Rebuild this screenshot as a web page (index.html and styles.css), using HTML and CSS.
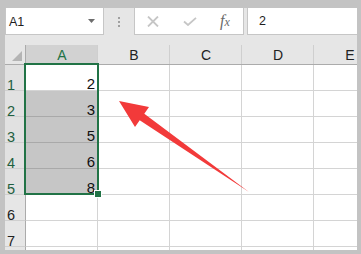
FILE: index.html
```html
<!DOCTYPE html>
<html>
<head>
<meta charset="utf-8">
<link rel="stylesheet" href="styles.css">
</head>
<body>
<div class="frame">
  <div class="toolbar">
    <div class="namebox">
      <span class="ref">A1</span>
      <svg class="dd" width="8" height="5" viewBox="0 0 8 5"><polygon points="0,0 7,0 3.5,4" fill="#6d6d6d"/></svg>
    </div>
    <div class="grip"><i></i><i></i><i></i></div>
    <div class="fbuttons">
      <svg class="ic" width="12" height="11" viewBox="0 0 12 11"><path d="M1 0.5 L11 10.5 M11 0.5 L1 10.5" stroke="#c6c6c6" stroke-width="1.8" fill="none"/></svg>
      <svg class="ic" width="14" height="9" viewBox="0 0 14 9"><path d="M1 4.5 L5 8 L13 0.8" stroke="#c6c6c6" stroke-width="1.8" fill="none"/></svg>
      <span class="fx">f<small>x</small></span>
    </div>
    <div class="formula">2</div>
  </div>
  <div class="sheet">
    <div class="corner"><span class="tri"></span></div>
    <div class="ch sel">A</div>
    <div class="ch">B</div>
    <div class="ch">C</div>
    <div class="ch">D</div>
    <div class="ch">E</div>

    <div class="rh sel">1</div><div class="c num">2</div><div class="c"></div><div class="c"></div><div class="c"></div><div class="c"></div>
    <div class="rh sel">2</div><div class="c num g">3</div><div class="c"></div><div class="c"></div><div class="c"></div><div class="c"></div>
    <div class="rh sel">3</div><div class="c num g">5</div><div class="c"></div><div class="c"></div><div class="c"></div><div class="c"></div>
    <div class="rh sel">4</div><div class="c num g">6</div><div class="c"></div><div class="c"></div><div class="c"></div><div class="c"></div>
    <div class="rh sel">5</div><div class="c num g">8</div><div class="c"></div><div class="c"></div><div class="c"></div><div class="c"></div>
    <div class="rh">6</div><div class="c"></div><div class="c"></div><div class="c"></div><div class="c"></div><div class="c"></div>
    <div class="rh">7</div><div class="c"></div><div class="c"></div><div class="c"></div><div class="c"></div><div class="c"></div>
    <div class="rh"></div><div class="c"></div><div class="c"></div><div class="c"></div><div class="c"></div><div class="c"></div>

    <div class="selection"></div>
    <div class="handle"></div>
  </div>
  <svg class="arrow" width="361" height="254" viewBox="0 0 361 254">
    <polygon points="119,101 149,107 144.3,113.7 249,192 139.7,120.3 135,127" fill="#f23a3a"/>
  </svg>
</div>
</body>
</html>
```

FILE: styles.css
```css
html, body {
  margin: 0;
  padding: 0;
  background: #c3c3c3;
}
.frame {
  position: relative;
  width: 361px;
  height: 254px;
  box-sizing: border-box;
  padding: 8px 4px 4px 5px;
  background: #c3c3c3;
  overflow: hidden;
  font-family: "Liberation Sans", Arial, sans-serif;
}
.toolbar {
  display: flex;
  align-items: flex-start;
  height: 37px;
  background: #e6e6e6;
}
.namebox {
  box-sizing: border-box;
  width: 99px;
  height: 27px;
  background: #fff;
  border: 1px solid #c6c6c6;
  border-top: none;
  display: flex;
  align-items: center;
  justify-content: space-between;
  padding: 0 7px 0 3px;
}
.ref {
  font-size: 12.5px;
  color: #1e1e1e;
  padding-top: 1px;
}
.dd { display: block; }
.grip {
  margin-left: 14px;
  padding-top: 9px;
  width: 2px;
  display: flex;
  flex-direction: column;
  gap: 2px;
}
.grip i {
  display: block;
  width: 2px;
  height: 2px;
  background: #a0a0a0;
}
.fbuttons {
  box-sizing: border-box;
  margin-left: 14px;
  width: 110px;
  height: 27px;
  background: #fff;
  border: 1px solid #c6c6c6;
  border-top: none;
  display: flex;
  align-items: center;
  padding-left: 12px;
  gap: 24px;
}
.fbuttons .ic { display: block; }
.fx {
  font-family: "Liberation Serif", "Times New Roman", serif;
  font-style: italic;
  font-size: 16px;
  color: #6a6a6a;
  margin-left: -1px;
}
.fx small {
  font-size: 12px;
}
.formula {
  box-sizing: border-box;
  margin-left: 3px;
  flex: 1;
  height: 27px;
  background: #fff;
  border: 1px solid #c6c6c6;
  border-top: none;
  border-right: none;
  padding-left: 11px;
  font-size: 12.5px;
  line-height: 26px;
  color: #1e1e1e;
}
.sheet {
  position: relative;
  height: 205px;
  overflow: hidden;
  background: #fff;
  display: grid;
  grid-template-columns: 21px 72px 72px 72px 72px 72px;
  grid-template-rows: 20px repeat(8, 26px);
}
.corner {
  position: relative;
  background: #e6e6e6;
  border-right: 1px solid #ababab;
  border-bottom: 1px solid #ababab;
}
.tri {
  position: absolute;
  right: 3px;
  bottom: 3px;
  width: 0;
  height: 0;
  border-left: 10px solid transparent;
  border-bottom: 10px solid #b4b4b4;
}
.ch {
  background: #e6e6e6;
  border-bottom: 1px solid #ababab;
  box-shadow: inset -1px 0 0 #cfcfcf;
  font-size: 14px;
  color: #222;
  text-align: center;
  line-height: 21px;
}
.ch.sel {
  background: #d2d2d2;
  color: #217346;
}
.rh {
  background: #e6e6e6;
  border-right: 1px solid #ababab;
  border-bottom: 1px solid #cfcfcf;
  font-size: 14.5px;
  color: #222;
  padding-left: 2px;
  line-height: 40px;
}
.rh.sel {
  background: #e1e1e1;
  color: #1f5f3f;
}
.c {
  border-right: 1px solid #d4d4d4;
  border-bottom: 1px solid #d4d4d4;
}
.num {
  text-align: right;
  font-size: 15px;
  color: #111;
  line-height: 38px;
  padding-right: 2px;
}
.c.g {
  background: #c6c6c6;
}
.c.num.g { border-bottom-color: #a9a9a9; }
.selection {
  position: absolute;
  left: 19px;
  top: 18px;
  width: 75px;
  height: 132px;
  box-sizing: border-box;
  border: 2px solid #217346;
}
.handle {
  position: absolute;
  left: 90px;
  top: 146px;
  width: 6px;
  height: 6px;
  background: #217346;
  box-shadow: 0 0 0 1px #fff;
}
.arrow {
  position: absolute;
  left: 0;
  top: 0;
  pointer-events: none;
}
```
